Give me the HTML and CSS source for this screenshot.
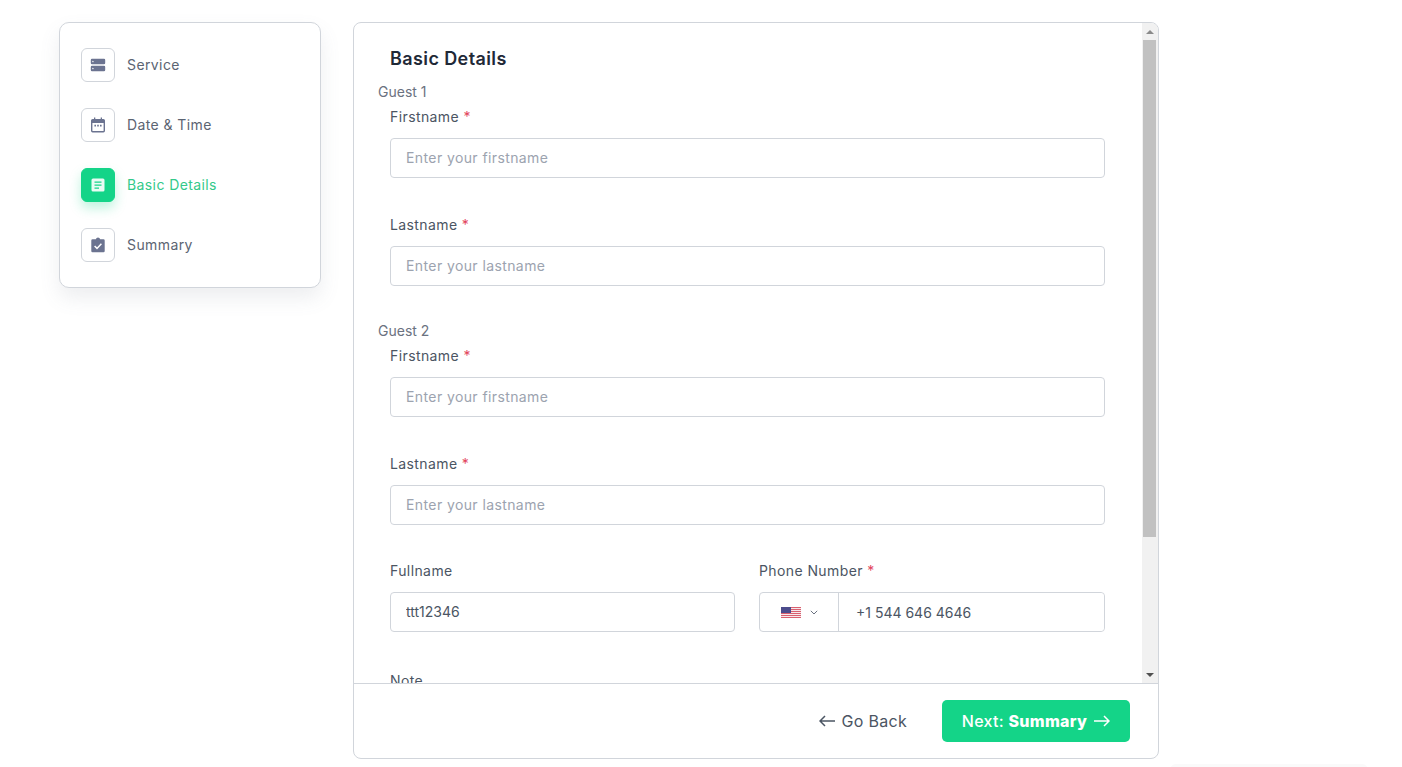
FILE: index.html
```html
<!DOCTYPE html>
<html lang="en">
<head>
	<title>Basic Details</title>
	<meta charset="UTF-8">
	<link rel="stylesheet" href="styles.css">
</head>
<body>
	<div class="page">
		<div class="steps">
			<div class="step">
				<div class="step-icon">
					<svg viewBox="0 0 16 16" width="16" height="16"><path fill="#6b7390" fill-rule="evenodd" d="M2 1.800h12a1.200 1.200 0 0 1 1.200 1.200v3a1.200 1.200 0 0 1-1.200 1.200H2A1.200 1.200 0 0 1 .8 6V3A1.200 1.200 0 0 1 2 1.800zm1.200 2.100a.7.7 0 1 0 0 1.300.7.7 0 0 0 0-1.300zM2 8.800h12a1.200 1.200 0 0 1 1.200 1.200v3a1.200 1.200 0 0 1-1.200 1.200H2A1.200 1.200 0 0 1 .8 13v-3A1.200 1.200 0 0 1 2 8.800zm1.200 2.100a.7.7 0 1 0 0 1.300.7.7 0 0 0 0-1.300z"/></svg>
				</div>
				<span>Service</span>
			</div>
			<div class="step">
				<div class="step-icon">
					<svg viewBox="0 0 16 16" width="16" height="16"><path fill="#6b7390" fill-rule="evenodd" d="M4 .5h1.300V2h5.400V.5H12V2h1.400A1.600 1.600 0 0 1 15 3.600v10.200a1.600 1.600 0 0 1-1.600 1.600H2.600A1.600 1.600 0 0 1 1 13.800V3.600A1.600 1.600 0 0 1 2.600 2H4zM2.400 6v7.400a.6.6 0 0 0 .6.6h10a.6.6 0 0 0 .6-.6V6z"/><path fill="#6b7390" d="M4.400 7.800h1.600v1.600H4.400zM7.200 7.800h1.600v1.600H7.200zM10 7.800h1.600v1.600H10z"/></svg>
				</div>
				<span>Date &amp; Time</span>
			</div>
			<div class="step active">
				<div class="step-icon">
					<svg viewBox="0 0 16 16" width="16" height="16"><path fill="#e9fbf3" fill-rule="evenodd" d="M3 1.500h10A1.500 1.500 0 0 1 14.500 3v10a1.500 1.500 0 0 1-1.500 1.500H3A1.500 1.500 0 0 1 1.500 13V3A1.500 1.500 0 0 1 3 1.500zM4.500 4.400v1.400h7V4.400zm0 3v1.400h7V7.400zm0 3v1.400h4.500v-1.400z"/></svg>
				</div>
				<span>Basic Details</span>
			</div>
			<div class="step">
				<div class="step-icon">
					<svg viewBox="0 0 16 16" width="16" height="16"><path fill="#6b7390" d="M2.500 2.200H5.800a2.300 2.300 0 0 1 4.400 0h3.300a1.200 1.200 0 0 1 1.200 1.200v10.600a1.200 1.200 0 0 1-1.200 1.200h-11a1.200 1.200 0 0 1-1.200-1.200V3.400a1.200 1.200 0 0 1 1.200-1.200z"/><path fill="none" stroke="#fff" stroke-width="1.500" d="M4.600 9l2.400 2.400 4.400-4.600"/></svg>
				</div>
				<span>Summary</span>
			</div>
		</div>

		<div class="panel">
			<div class="panel-top">
				<div class="panel-body">
					<h1>Basic Details</h1>

					<div class="guest-title">Guest 1</div>
					<div class="field">
						<label>Firstname <em>*</em></label>
						<input type="text" placeholder="Enter your firstname">
					</div>
					<div class="field">
						<label>Lastname <em>*</em></label>
						<input type="text" placeholder="Enter your lastname">
					</div>

					<div class="guest-title">Guest 2</div>
					<div class="field">
						<label>Firstname <em>*</em></label>
						<input type="text" placeholder="Enter your firstname">
					</div>
					<div class="field">
						<label>Lastname <em>*</em></label>
						<input type="text" placeholder="Enter your lastname">
					</div>

					<div class="two-cols">
						<div class="col col-name">
							<label>Fullname</label>
							<input type="text" value="ttt12346">
						</div>
						<div class="col">
							<label>Phone Number <em>*</em></label>
							<div class="phone">
								<div class="country">
									<svg viewBox="0 0 20 11" width="20" height="11">
										<rect width="20" height="11" fill="#f6e9ec"/>
										<path fill="#d9606f" d="M0 0h20v1H0zM0 2h20v1H0zM0 4h20v1H0zM0 6h20v1H0zM0 8h20v1H0zM0 10h20v1H0z"/>
										<rect width="10" height="6" fill="#4c4c8c"/>
									</svg>
									<svg viewBox="0 0 8 5" width="8" height="5"><path fill="none" stroke="#6b7280" stroke-width="1" d="M.8.800L4 4l3.200-3.200"/></svg>
								</div>
								<input type="text" value="+1 544 646 4646">
							</div>
						</div>
					</div>

					<div class="field note">
						<label>Note</label>
						<textarea rows="4"></textarea>
					</div>
				</div>
				<!-- drawn scrollbar -->
				<div class="scrollbar">
					<div class="sb-btn"><div class="arrow-up"></div></div>
					<div class="sb-thumb"></div>
					<div class="sb-rest"></div>
					<div class="sb-btn"><div class="arrow-down"></div></div>
				</div>
			</div>

			<div class="panel-footer">
				<a class="back">
					<svg viewBox="0 0 16 12" width="16" height="12"><path fill="none" stroke="#4b5563" stroke-width="1.500" d="M16 6H1.200M6 1L1 6l5 5"/></svg>
					Go Back
				</a>
				<a class="next">
					<span>Next: <b>Summary</b></span>
					<svg viewBox="0 0 16 12" width="16" height="12"><path fill="none" stroke="#fff" stroke-width="1.500" d="M0 6h14.800M10 1l5 5-5 5"/></svg>
				</a>
			</div>
		</div>
	</div>
	<div class="corner-widget"></div>
</body>
</html>
```

FILE: styles.css
```css
* {
	box-sizing: border-box;
}
html, body {
	height: 100%;
}
body {
	margin: 0;
	background: #fff;
	font-family: Inter, "Open Sans", sans-serif;
	font-size: 14px;
	color: #4b5563;
	overflow: hidden;
}
.page {
	display: flex;
	align-items: flex-start;
	gap: 32px;
	padding: 22px 0 0 59px;
}

/* left steps */
.steps {
	width: 262px;
	height: 266px;
	padding: 25px 21px;
	background: #fff;
	border: 1px solid #d1d5db;
	border-radius: 10px;
	box-shadow: 0 10px 20px rgba(107, 114, 128, 0.12);
	display: flex;
	flex-direction: column;
	gap: 26px;
}
.step {
	display: flex;
	align-items: center;
	gap: 12px;
	font-size: 14px;
	letter-spacing: 0.4px;
	line-height: 32px;
	color: #5b6472;
}
.step-icon {
	width: 34px;
	height: 34px;
	border: 1px solid #d1d5db;
	border-radius: 6px;
	display: flex;
	align-items: center;
	justify-content: center;
}
.step.active {
	color: #34c98a;
}
.step.active .step-icon {
	background: #14d488;
	border-color: #14d488;
	box-shadow: 0 6px 12px rgba(20, 212, 136, 0.28);
}

/* main panel */
.panel {
	width: 806px;
	height: 737px;
	background: #fff;
	border: 1px solid #d1d5db;
	border-radius: 8px;
	display: flex;
	flex-direction: column;
	overflow: hidden;
}
.panel-top {
	flex: 1;
	min-height: 0;
	display: flex;
}
.panel-body {
	flex: 1;
	min-width: 0;
	overflow: hidden;
	padding: 22px 37px 0 36px;
}
.scrollbar {
	width: 16px;
	flex-shrink: 0;
	background: #f1f1f1;
	display: flex;
	flex-direction: column;
}
.sb-btn {
	height: 17px;
	display: flex;
	align-items: center;
	justify-content: center;
}
.arrow-up {
	border: 4px solid transparent;
	border-top: 0;
	border-bottom-color: #8a8a8a;
}
.arrow-down {
	border: 4px solid transparent;
	border-bottom: 0;
	border-top-color: #505050;
}
.sb-thumb {
	height: 497px;
	margin: 0 2px 0 1px;
	background: #c1c1c1;
}
.sb-rest {
	flex: 1;
}
h1 {
	margin: 0 0 10px;
	font-size: 18px;
	line-height: 28px;
	font-weight: 600;
	letter-spacing: 0.4px;
	color: #1f2937;
}
.guest-title {
	margin: 0 0 5px -12px;
	line-height: 18px;
	font-size: 14px;
	color: #6b7280;
}
label {
	display: block;
	height: 22px;
	line-height: 22px;
	margin-bottom: 10px;
	font-size: 14px;
	letter-spacing: 0.4px;
	color: #4b5563;
}
label em {
	font-style: normal;
	color: #e2445c;
}
.field {
	margin-bottom: 36px;
}
input, textarea {
	display: block;
	width: 100%;
	height: 40px;
	padding: 0 15px 1px;
	font: inherit;
	color: #4b5563;
	background: #fff;
	border: 1px solid #d1d5db;
	border-radius: 4px;
	outline: none;
}
textarea {
	height: 110px;
	resize: none;
}
input::placeholder {
	color: #9ca3af;
	letter-spacing: 0.4px;
}
.two-cols {
	display: flex;
	gap: 24px;
	margin: -1px 0 38px;
}
.col {
	flex: 1;
	min-width: 0;
}
.col-name {
	flex: 0 0 345px;
}
.phone {
	display: flex;
	height: 40px;
	border: 1px solid #d1d5db;
	border-radius: 4px;
}
.phone input {
	flex: 1;
	height: 38px;
	border: 0;
	padding: 0 15px 0 17px;
}
.country {
	width: 79px;
	padding-top: 1px;
	border-right: 1px solid #d1d5db;
	display: flex;
	align-items: center;
	justify-content: center;
	gap: 9px;
}
.note {
	margin-bottom: 0;
	padding-bottom: 50px;
}

/* bottom bar */
.panel-footer {
	height: 75px;
	flex-shrink: 0;
	border-top: 1px solid #d1d5db;
	display: flex;
	align-items: center;
	justify-content: flex-end;
	gap: 35px;
	padding: 0 28px 0 0;
}
.back {
	display: flex;
	align-items: center;
	gap: 6px;
	font-size: 16px;
	letter-spacing: 0.3px;
	color: #4b5563;
}
.next {
	width: 188px;
	height: 42px;
	background: #14d488;
	border-radius: 5px;
	color: #fff;
	font-size: 16px;
	font-weight: 500;
	letter-spacing: 0.3px;
	display: flex;
	align-items: center;
	justify-content: center;
	gap: 7px;
}
.next b {
	font-weight: 800;
}

/* faint edge of a floating widget at the window bottom */
.corner-widget {
	position: absolute;
	left: 1170px;
	top: 764px;
	width: 198px;
	height: 20px;
	background: #fafafa;
	border-radius: 6px;
}
```
